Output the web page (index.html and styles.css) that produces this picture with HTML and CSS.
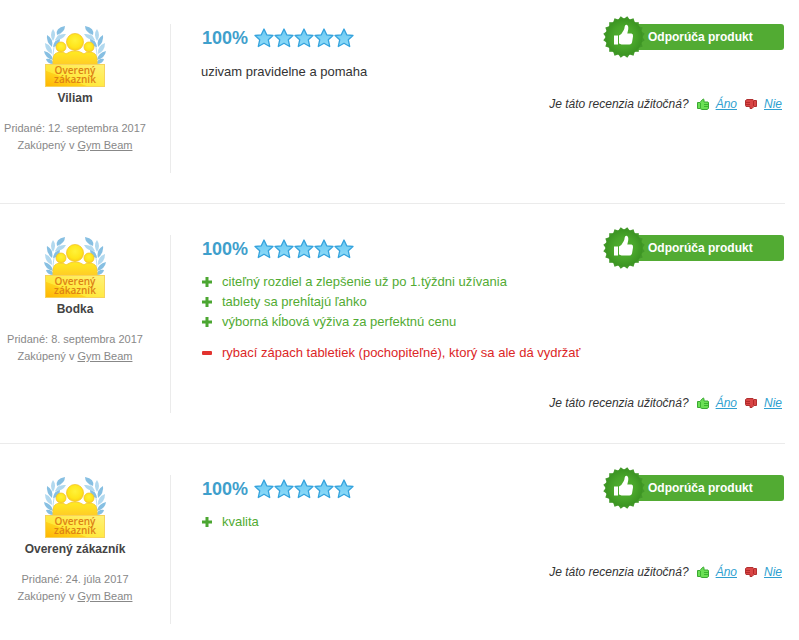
FILE: index.html
```html
<!DOCTYPE html>
<html lang="sk">
<head>
<meta charset="utf-8">
<title>Recenzie produktu</title>
<link rel="stylesheet" href="styles.css">
</head>
<body>
<svg class="sprite" aria-hidden="true">
  <defs>
    <radialGradient id="gold" cx=".5" cy=".4" r=".6"><stop offset="0" stop-color="#fff23a"/><stop offset=".7" stop-color="#ffe51a"/><stop offset="1" stop-color="#fbcb1a"/></radialGradient>
    <linearGradient id="goldBody" x1="0" y1="0" x2="0" y2="1"><stop offset="0" stop-color="#ffec20"/><stop offset="1" stop-color="#ffc828"/></linearGradient>
    <linearGradient id="banner" x1="0" y1="1" x2="1" y2="0"><stop offset="0" stop-color="#ffb400"/><stop offset=".35" stop-color="#ffd21c"/><stop offset=".37" stop-color="#ffe838"/><stop offset="1" stop-color="#fff27a"/></linearGradient>
    <linearGradient id="starFill" x1="0" y1="0" x2="0" y2="1"><stop offset="0" stop-color="#6cc8f2"/><stop offset="1" stop-color="#8edcf9"/></linearGradient>
    <radialGradient id="sealFill"><stop offset="0" stop-color="#52b22f"/><stop offset=".6" stop-color="#48a52a"/><stop offset="1" stop-color="#3b9422"/></radialGradient>
    <g id="laurel">
      <path d="M20 5Q6 17 10 40" fill="none" stroke="#b9dcf0" stroke-width="1"/>
      <g fill="#86bfe2">
        <path d="M13 11Q11 4 21 2Q21 8 13 11Z"/>
        <path d="M9 17Q5 11 9 5Q13 10 9 17Z" fill="#b2d9ef"/>
        <path d="M11 16Q14 9 22 10Q19 16 11 16Z" fill="#b2d9ef"/>
        <path d="M8 23Q2 18 3 11Q10 15 8 23Z"/>
        <path d="M9 23Q10 16 16 15Q16 22 9 23Z"/>
        <path d="M8 30Q1 27 1 19Q9 22 8 30Z" fill="#b2d9ef"/>
        <path d="M9 36Q1 34 0 27Q8 29 9 36Z"/>
        <path d="M10 40Q3 40 2 35Q8 34 10 40Z"/>
      </g>
    </g>
    <symbol id="verified" viewBox="0 0 62 64">
      <use href="#laurel"/>
      <use href="#laurel" transform="matrix(-1 0 0 1 62 0)"/>
      <path d="M9 42V36Q9 28 17 28Q20 28 22 30Q26 27 31 27Q36 27 40 30Q42 28 45 28Q53 28 53 36V42Z" fill="url(#goldBody)" stroke="#f9cf30"/>
      <circle cx="17" cy="23" r="5" fill="url(#gold)" stroke="#f4c42c" stroke-width=".8"/>
      <circle cx="45" cy="23" r="5" fill="url(#gold)" stroke="#f4c42c" stroke-width=".8"/>
      <circle cx="31" cy="18" r="8.500" fill="url(#gold)" stroke="#f4c42c" stroke-width=".8"/>
      <rect x="1.500" y="40.500" width="59" height="22" fill="url(#banner)" stroke="#f7d35a"/>
      <text class="verified-text" x="31" y="50" text-anchor="middle">Overený</text>
      <text class="verified-text" x="31" y="59" text-anchor="middle">zákazník</text>
    </symbol>
    <path id="star" d="M10 1L12.700 6.800L19 7.500L14.300 11.800L15.700 18.500L10 15.200L4.300 18.500L5.700 11.800L1 7.500L7.300 6.800Z" fill="url(#starFill)" stroke="#35a3dd" stroke-width="1.300" stroke-linejoin="round"/>
    <symbol id="stars" viewBox="0 0 100 20">
      <use href="#star"/><use href="#star" x="20"/><use href="#star" x="40"/><use href="#star" x="60"/><use href="#star" x="80"/>
    </symbol>
    <rect id="tooth" x="-14.800" y="-14.800" width="29.600" height="29.600"/>
    <symbol id="seal" viewBox="0 0 42 42">
      <g transform="translate(21 21)" fill="#43992a">
        <use href="#tooth"/><use href="#tooth" transform="rotate(18)"/><use href="#tooth" transform="rotate(36)"/><use href="#tooth" transform="rotate(54)"/><use href="#tooth" transform="rotate(72)"/>
        <circle r="18.500" fill="url(#sealFill)"/>
      </g>
      <path d="M11 19.500H15V28.500H11ZM16 19.500Q19 18 20.500 14.500Q21.500 13 21.700 10.500Q22 8.500 23.500 8.700Q25.800 9.300 25.200 13.500L24.300 17.500H28.500Q30.500 18 30 20.500L29 26.500Q28.500 28.500 26.500 28.500H18.500L16 27.500Z" fill="#fff"/>
    </symbol>
    <symbol id="yes" viewBox="0 0 14 12">
      <path d="M1.500 4.500H4L6.500 1.500Q7 .5 8 1.500V4H12L12.500 5V10.500L11 11.500H6L4 10.500H1.500Z" fill="#6be055" stroke="#3aa832"/>
      <path d="M4.500 5V10M8 6.500H12M8 8.500H12" fill="none" stroke="#3bb32f"/>
    </symbol>
    <symbol id="no" viewBox="0 0 14 12">
      <path d="M1.500 2.500L3 1.500H9L10 2.500H12.500V8.500H10L8 10.500H6V8.500H2L1.500 7.500Z" fill="#d94545" stroke="#b03030"/>
      <path d="M9.500 3V8M2 4.500H6M2 6.500H6" fill="none" stroke="#b52a2a"/>
    </symbol>
    <symbol id="plus" viewBox="0 0 10 10"><path d="M3.500 0H6.500V3.500H10V6.500H6.500V10H3.500V6.500H0V3.500H3.500Z" fill="#4ba631"/></symbol>
    <symbol id="minus" viewBox="0 0 10 10"><rect y="3" width="10" height="4" rx="1" fill="#e2332f"/></symbol>
  </defs>
</svg>

<main class="reviews">
  <article class="review">
    <aside class="author">
      <svg class="verified" role="img" aria-label="Overený zákazník"><use href="#verified"/></svg>
      <h2 class="name">Viliam</h2>
      <p class="meta">Pridané: 12. septembra 2017<br>Zakúpený v <a href="#">Gym Beam</a></p>
    </aside>
    <div class="content">
      <div class="top">
        <strong class="score">100%</strong>
        <svg class="stars" role="img" aria-label="5 z 5"><use href="#stars"/></svg>
        <div class="recommend"><svg class="seal" aria-hidden="true"><use href="#seal"/></svg>Odporúča produkt</div>
      </div>
      <p class="text">uzivam pravidelne a pomaha</p>
      <div class="helpful"><span>Je táto recenzia užitočná?</span><svg class="thumb" aria-hidden="true"><use href="#yes"/></svg><a href="#">Áno</a><svg class="thumb" aria-hidden="true"><use href="#no"/></svg><a href="#">Nie</a></div>
    </div>
  </article>

  <article class="review">
    <aside class="author">
      <svg class="verified" role="img" aria-label="Overený zákazník"><use href="#verified"/></svg>
      <h2 class="name">Bodka</h2>
      <p class="meta">Pridané: 8. septembra 2017<br>Zakúpený v <a href="#">Gym Beam</a></p>
    </aside>
    <div class="content">
      <div class="top">
        <strong class="score">100%</strong>
        <svg class="stars" role="img" aria-label="5 z 5"><use href="#stars"/></svg>
        <div class="recommend"><svg class="seal" aria-hidden="true"><use href="#seal"/></svg>Odporúča produkt</div>
      </div>
      <div class="points">
        <ul class="pros">
          <li><svg class="mark" aria-hidden="true"><use href="#plus"/></svg>citeľný rozdiel a zlepšenie už po 1.týždni užívania</li>
          <li><svg class="mark" aria-hidden="true"><use href="#plus"/></svg>tablety sa prehĺtajú ľahko</li>
          <li><svg class="mark" aria-hidden="true"><use href="#plus"/></svg>výborná kĺbová výživa za perfektnú cenu</li>
        </ul>
        <ul class="cons">
          <li><svg class="mark" aria-hidden="true"><use href="#minus"/></svg>rybací zápach tabletiek (pochopiteľné), ktorý sa ale dá vydržať</li>
        </ul>
      </div>
      <div class="helpful"><span>Je táto recenzia užitočná?</span><svg class="thumb" aria-hidden="true"><use href="#yes"/></svg><a href="#">Áno</a><svg class="thumb" aria-hidden="true"><use href="#no"/></svg><a href="#">Nie</a></div>
    </div>
  </article>

  <article class="review">
    <aside class="author">
      <svg class="verified" role="img" aria-label="Overený zákazník"><use href="#verified"/></svg>
      <h2 class="name">Overený zákazník</h2>
      <p class="meta">Pridané: 24. júla 2017<br>Zakúpený v <a href="#">Gym Beam</a></p>
    </aside>
    <div class="content">
      <div class="top">
        <strong class="score">100%</strong>
        <svg class="stars" role="img" aria-label="5 z 5"><use href="#stars"/></svg>
        <div class="recommend"><svg class="seal" aria-hidden="true"><use href="#seal"/></svg>Odporúča produkt</div>
      </div>
      <div class="points">
        <ul class="pros">
          <li><svg class="mark" aria-hidden="true"><use href="#plus"/></svg>kvalita</li>
        </ul>
      </div>
      <div class="helpful"><span>Je táto recenzia užitočná?</span><svg class="thumb" aria-hidden="true"><use href="#yes"/></svg><a href="#">Áno</a><svg class="thumb" aria-hidden="true"><use href="#no"/></svg><a href="#">Nie</a></div>
    </div>
  </article>
</main>
</body>
</html>
```
FILE: styles.css
```css
* {
  box-sizing: border-box;
}

body {
  margin: 0;
  background: #fff;
  color: #333;
  font-family: "Liberation Sans", Arial, sans-serif;
  font-size: 13px;
  line-height: 20px;
}

h2,
p,
ul {
  margin: 0;
  padding: 0;
}

ul {
  list-style: none;
}

svg {
  display: block;
  flex: none;
}

.sprite {
  position: absolute;
  width: 0;
  height: 0;
}

.reviews {
  margin-right: 14px;
}

.review {
  display: grid;
  grid-template-columns: 171px 1fr;
  padding: 31px 0 30px;
  border-bottom: 1px solid #ebebeb;
}

.review:first-child {
  padding-top: 24px;
}

.review:last-child {
  padding-bottom: 0;
  border-bottom: 0;
}

.author {
  display: flex;
  flex-direction: column;
  align-items: center;
  min-height: 149px;
  padding-right: 20px;
  border-right: 1px solid #ebebeb;
  text-align: center;
}

.verified {
  width: 62px;
  height: 64px;
}

.verified-text {
  fill: #dd8114;
  font: 600 10px "Open Sans", sans-serif;
}

.name {
  color: #444;
  font-size: 12px;
  line-height: 20px;
}

.meta {
  margin-top: 12px;
  color: #888;
  font-size: 11px;
  line-height: 17px;
}

.meta a {
  color: inherit;
}

.content {
  padding-left: 30px;
}

.top {
  display: flex;
  align-items: center;
  height: 28px;
}

.score {
  width: 53px;
  padding-left: 1px;
  color: #3fa0cc;
  font-size: 18px;
}

.stars {
  width: 100px;
  height: 20px;
}

.recommend {
  position: relative;
  width: 162px;
  margin: 0 1px 2px auto;
  padding: 3px 0 3px 26px;
  border-radius: 3px;
  background: #52ab33;
  color: #fff;
  font-size: 12px;
  font-weight: bold;
}

.seal {
  position: absolute;
  top: -8px;
  left: -19px;
  width: 42px;
  height: 42px;
}

.text {
  margin-top: 10px;
}

.points {
  margin-top: 9px;
  padding-bottom: 18px;
}

.pros {
  color: #52ab33;
}

.cons {
  margin-top: 11px;
  color: #dc2626;
}

.points li {
  display: flex;
  align-items: center;
  gap: 10px;
  padding-left: 1px;
}

.mark {
  width: 10px;
  height: 10px;
}

.helpful {
  display: flex;
  align-items: center;
  justify-content: flex-end;
  gap: 6px;
  margin-top: 12px;
  padding-right: 3px;
  font-size: 12px;
  font-style: italic;
}

.helpful a {
  color: #2f9fd0;
}

.thumb {
  width: 14px;
  height: 12px;
  margin-left: 1px;
}
```
